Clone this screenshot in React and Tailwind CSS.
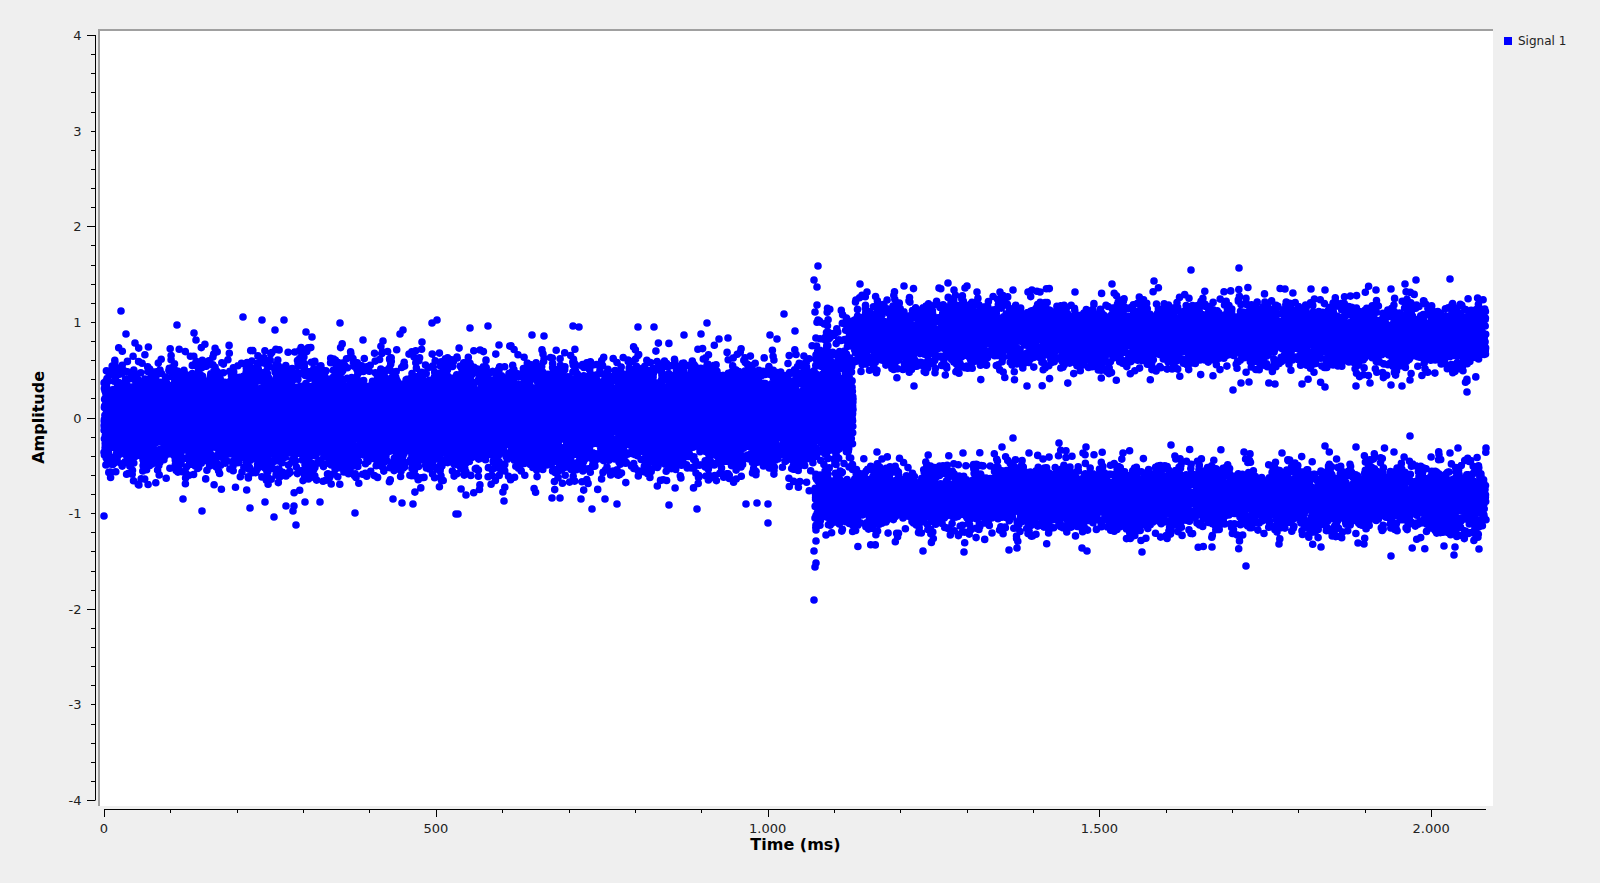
import React, { useMemo } from 'react';

// hand picked stray points, page pixel coordinates
const strays = [
  [121,311],[243,317],[262,320],[284,320],[340,323],[437,320],[432,323],[177,325],[126,334],[275,330],[306,332],[312,337],[194,333],[403,330],[400,334],[196,340],[363,340],[383,341],[135,343],[422,342],
  [488,326],[470,328],[573,326],[579,327],[638,327],[654,327],[707,323],[784,314],[532,335],[544,336],[684,335],[701,334],[770,335],[795,331],[499,345],[719,339],[728,338],[777,339],
  [104,516],[296,525],[274,517],[202,511],[355,513],[456,514],[293,511],[250,508],[286,506],[294,506],[413,504],[402,503],[393,499],[183,499],[265,502],[305,502],[320,502],
  [458,514],[768,523],[592,509],[697,509],[746,504],[757,503],[768,504],[617,504],[669,505],[504,501],[581,499],[605,499],[552,498],[560,498],[466,495],
  [818,266],[1191,270],[1239,268],[814,280],[817,287],[1154,281],[1450,279],[1416,280],[1405,284],[1112,284],[904,286],[860,284],[948,283],[967,286],[965,288],[1285,289],[1311,289],[1325,290],[1376,290],[1391,289],[1013,290],[867,292],[954,290],[977,292],[1075,292],[1040,292],[1028,292],[1000,292],
  [914,386],[1027,386],[1233,390],[1325,387],[1467,392],[1275,384],[1356,386],[1391,385],[1402,386],[1302,384],[1370,383],[1241,383],[1249,382],[1467,381],
  [814,600],[816,563],[815,567],[814,551],[816,530],[816,541],[826,535],[1246,566],[1391,556],[1454,555],[1455,547],[1479,549],[923,551],[964,552],[1009,550],[1017,548],[1082,548],[1087,551],[1142,552],[1212,547],[1279,544],[1321,547],[1358,543],[1364,544],[1444,546],
  [1013,438],[1410,436],[1059,443],[1002,447],[1086,447],[1171,445],[1325,446],[1356,447],[1458,448],[1486,448],[877,452],[1394,452],[1083,453],[1244,452],[1282,453],[1123,453],[963,453],[1029,453],[1450,453],
  [815,518],[817,305],[815,312],[818,320],
];

const makeRandom = (seed) => () => {
  seed = (seed + 0x6d2b79f5) | 0;
  let t = Math.imul(seed ^ (seed >>> 15), 1 | seed);
  t = (t + Math.imul(t ^ (t >>> 7), 61 | t)) ^ t;
  return ((t ^ (t >>> 14)) >>> 0) / 4294967296;
};

const buildDots = () => {
  const rand = makeRandom(20240);
  const gauss = (cap) => {
    let v;
    do {
      v = Math.sqrt(-2 * Math.log(rand() + 1e-9)) * Math.cos(2 * Math.PI * rand());
    } while (Math.abs(v) > cap);
    return v;
  };
  const pts = [...strays];
  // noise before the signal switches on
  for (let i = 0; i < 13000; i++) {
    pts.push([104 + rand() * 711, 418 + gauss(3) * 25]);
  }
  // transition: mostly noise, low level comes in first
  for (let i = 0; i < 620; i++) {
    pts.push([815 + rand() * 38, 412 + gauss(2.3) * 26]);
  }
  for (let i = 0; i < 330; i++) {
    pts.push([815 + rand() * 38, 498 + gauss(2.6) * 15]);
  }
  for (let i = 0; i < 110; i++) {
    pts.push([815 + rand() * 38, 345 + gauss(2.2) * 18]);
  }
  // two levels after it
  for (let i = 0; i < 11000; i++) {
    const up = rand() < 0.5;
    const c = up ? 335 : 498;
    pts.push([853 + rand() * 633, c + gauss(3.2) * 16]);
  }
  return pts.map(([x, y]) => `M${x.toFixed(1)} ${y.toFixed(1)}h0`).join('');
};

const yTicks = [];
for (let i = 0; i <= 40; i++) yTicks.push(i);

const xTicks = [];
for (let i = 0; i <= 20; i++) xTicks.push(i);

const xLabels = ['0', '500', '1.000', '1.500', '2.000'];

const YAxis = () => (
  <svg className="w-[38px] h-full shrink-0 block overflow-visible" viewBox="60 29 38 777">
    <path d="M95.5 35V800" className="stroke-black" fill="none" />
    {yTicks.map((i) => {
      const y = Math.round(35 + i * 19.125) + 0.5;
      const major = i % 10 === 0;
      return <path key={i} d={`M${major ? 87 : 91} ${y}H95.5`} className="stroke-black" fill="none" />;
    })}
    {[4, 3, 2, 1, 0, -1, -2, -3, -4].map((v, i) => (
      <text key={v} x="81.5" y={35 + i * 95.625 + 5} textAnchor="end" fontSize="13" className="fill-[#222222]">
        {v}
      </text>
    ))}
  </svg>
);

const XAxis = () => (
  <svg className="w-[1395px] h-[29px] block" viewBox="98 806 1395 29">
    <path d="M104 809.5H1486" className="stroke-black" fill="none" />
    {xTicks.map((i) => {
      const x = Math.round(104 + i * 66.36) + 0.5;
      const major = i % 5 === 0;
      return <path key={i} d={`M${x} 809V${major ? 817 : 813}`} className="stroke-black" fill="none" />;
    })}
    {xLabels.map((l, i) => (
      <text key={l} x={104 + i * 331.8} y="832.5" textAnchor="middle" fontSize="13" className="fill-[#222222]">
        {l}
      </text>
    ))}
  </svg>
);

export default function App() {
  const dots = useMemo(buildDots, []);

  return (
    <div className="w-[1600px] h-[883px] overflow-hidden bg-[#efefef] pt-[29px] font-['DejaVu_Sans',sans-serif] text-[#222222]">
      <div className="flex h-[777px]">
        <div className="w-[60px] shrink-0 flex items-center pl-[29px]">
          <span className="[writing-mode:vertical-rl] rotate-180 text-[16px] leading-[20px] font-bold text-black">
            Amplitude
          </span>
        </div>
        <YAxis />
        <div className="w-[1395px] shrink-0 bg-white border-t-2 border-l-2 border-[#a0a0a0]">
          <svg className="w-full h-full block" viewBox="100 31 1393 775">
            <path d={dots} className="stroke-[#0000ff]" strokeWidth="7.6" strokeLinecap="round" fill="none" />
          </svg>
        </div>
        <div className="flex-1 pl-[11px] pt-[4px]">
          <div className="flex items-center gap-[6px] text-[12px] leading-[16px]">
            <span className="w-[8px] h-[8px] bg-[#0000ff]" />
            Signal 1
          </div>
        </div>
      </div>
      <div className="ml-[98px] w-[1395px]">
        <XAxis />
        <div className="text-center text-[16px] leading-[20px] font-bold text-black">Time (ms)</div>
      </div>
    </div>
  );
}
